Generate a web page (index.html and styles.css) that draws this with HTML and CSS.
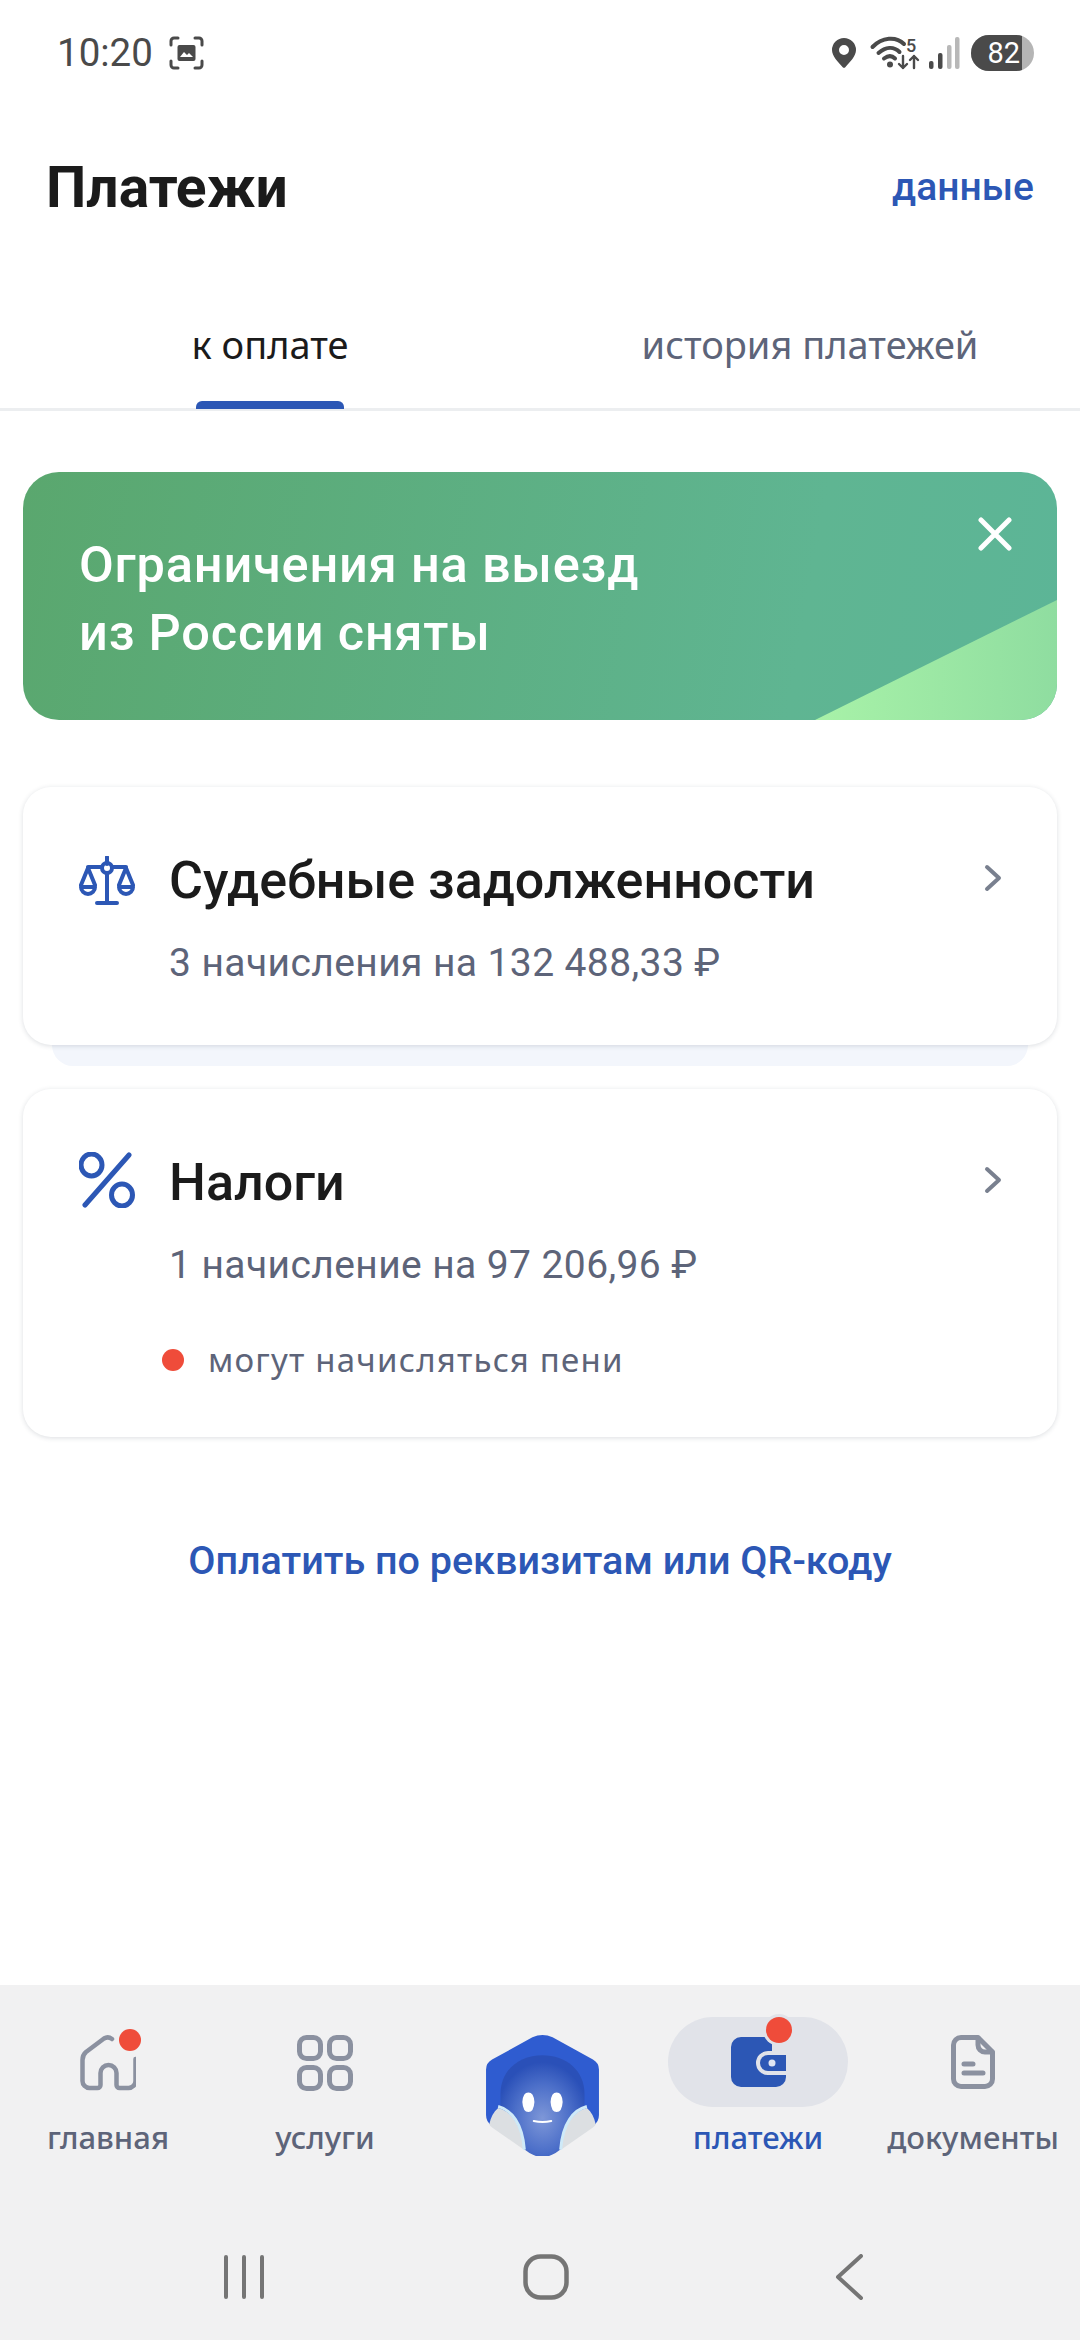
FILE: index.html
```html
<!DOCTYPE html>
<html lang="ru">
<head>
<meta charset="utf-8">
<title>Платежи</title>
<link rel="stylesheet" href="styles.css">
</head>
<body>
<div class="screen">
  <div class="status">
    <div class="status-left">
      <span class="time">10:20</span>
      <svg class="ic-shot" viewBox="0 0 35 34"><g fill="none" stroke="#4a4a4a" stroke-width="3" stroke-linecap="round"><path d="M2 9V5a3 3 0 0 1 3-3h4M26 2h4a3 3 0 0 1 3 3v4M33 25v4a3 3 0 0 1-3 3h-4M9 32H5a3 3 0 0 1-3-3v-4"/></g><rect x="8.500" y="9" width="18" height="16" rx="2" fill="#4a4a4a"/><path d="M11 21l4-5 3 3 2-2 4 4z" fill="#fff"/></svg>
    </div>
    <div class="status-right">
      <svg class="ic-pin" viewBox="0 0 24 30"><path fill-rule="evenodd" d="M12 0a12 12 0 0 1 12 12c0 6-6 12-10.500 17a2 2 0 0 1-3 0C6 24 0 18 0 12A12 12 0 0 1 12 0zm0 7a5 5 0 1 0 0 10 5 5 0 0 0 0-10z" fill="#4a4a4a"/></svg>
      <svg class="ic-wifi" viewBox="0 0 50 34"><g fill="none" stroke="#4a4a4a" stroke-width="4" stroke-linecap="round"><path d="M2.500 11C12 1 26 0 34 8"/><path d="M8.500 17c7-6 15-7 21-1"/><path d="M14 22.500c4-3 8-3 11 0"/></g><circle cx="20" cy="28.500" r="3" fill="#4a4a4a"/><g fill="none" stroke="#4a4a4a" stroke-width="2.400" stroke-linecap="round" stroke-linejoin="round"><path d="M33 20v12M29 28l4 4 4-4"/><path d="M44 32V20M40 24l4-4 4 4"/></g><text x="36" y="16" class="wifi-5">5</text></svg>
      <svg class="ic-signal" viewBox="0 0 32 34"><rect x="1" y="25" width="4.500" height="8" rx="2" fill="#4a4a4a"/><rect x="10" y="17" width="4.500" height="16" rx="2" fill="#4a4a4a"/><rect x="19" y="9" width="4.500" height="24" rx="2" fill="#b8b8b8"/><rect x="27" y="1" width="4.500" height="32" rx="2" fill="#b8b8b8"/></svg>
      <div class="battery"><div class="battery-level">82</div></div>
    </div>
  </div>

  <header class="header">
    <h1 class="title">Платежи</h1>
    <span class="data-link">данные</span>
  </header>

  <nav class="tabs">
    <div class="tab tab-active"><span>к оплате</span><i class="tab-bar"></i></div>
    <div class="tab"><span>история платежей</span></div>
  </nav>

  <section class="banner">
    <i class="banner-wedge"></i>
    <p class="banner-text">Ограничения на выезд<br>из России сняты</p>
    <svg class="banner-close" viewBox="0 0 34 34"><path d="M3 3l28 28M31 3L3 31" stroke="#fff" stroke-width="5" stroke-linecap="round"/></svg>
  </section>

  <section class="cards">
    <div class="card-stack">
      <article class="card card-court">
        <div class="card-head">
          <svg class="card-icon" viewBox="0 0 56 50"><g fill="none" stroke="#2c57b5" stroke-width="4" stroke-linecap="round" stroke-linejoin="round"><path d="M28 1v7"/><circle cx="28" cy="12" r="5"/><path d="M28 17v29M18 47h20M23 11H9M33 11h14"/><path d="M9 12L2 29M9 12l7 17M47 12l-7 17M47 12l7 17"/><path d="M2 31h14a7 7 0 0 1-14 0zM40 31h14a7 7 0 0 1-14 0z"/></g></svg>
          <h2 class="card-title">Судебные задолженности</h2>
          <svg class="chevron" viewBox="0 0 18 28"><path d="M3 3l12 11L3 25" fill="none" stroke="#79808f" stroke-width="4" stroke-linecap="round" stroke-linejoin="round"/></svg>
        </div>
        <p class="card-sub">3 начисления на 132 488,33 ₽</p>
      </article>
      <div class="card-under"></div>
    </div>
    <article class="card card-tax">
      <div class="card-head">
        <svg class="card-icon card-icon-tax" viewBox="0 0 56 56"><g fill="none" stroke="#2c57b5" stroke-width="5" stroke-linecap="round"><path d="M50 3L6 53"/><ellipse cx="12.500" cy="13" rx="10.500" ry="11"/><ellipse cx="43" cy="43" rx="10.500" ry="11"/></g></svg>
        <h2 class="card-title">Налоги</h2>
        <svg class="chevron" viewBox="0 0 18 28"><path d="M3 3l12 11L3 25" fill="none" stroke="#79808f" stroke-width="4" stroke-linecap="round" stroke-linejoin="round"/></svg>
      </div>
      <p class="card-sub">1 начисление на 97 206,96 ₽</p>
      <div class="card-warn"><i class="warn-dot"></i><span>могут начисляться пени</span></div>
    </article>
  </section>

  <div class="pay-link">Оплатить по реквизитам или QR-коду</div>

  <div class="bottom">
    <nav class="nav">
      <div class="nav-item nav-home">
        <div class="nav-icon">
          <svg viewBox="0 0 56 56"><path d="M32 4Q28 1 24 3.500L6 17Q2.500 20 2.500 25V46a7 7 0 0 0 7 7h8a3 3 0 0 0 3-3V38a8 8 0 0 1 16 0V50a3 3 0 0 0 3 3h9a7 7 0 0 0 7-7V24" fill="none" stroke="#8b91a0" stroke-width="4.500" stroke-linecap="round" stroke-linejoin="round"/></svg>
          <i class="badge badge-home"></i>
        </div>
        <span class="nav-label">главная</span>
      </div>
      <div class="nav-item nav-services">
        <div class="nav-icon">
          <svg viewBox="0 0 56 56"><g fill="none" stroke="#8b91a0" stroke-width="5"><rect x="2.500" y="2.500" width="21" height="21" rx="7"/><rect x="32.500" y="2.500" width="21" height="21" rx="7"/><rect x="2.500" y="32.500" width="21" height="21" rx="7"/><rect x="32.500" y="32.500" width="21" height="21" rx="7"/></g></svg>
        </div>
        <span class="nav-label">услуги</span>
      </div>
      <div class="nav-item nav-bot">
        <svg class="mascot" viewBox="132 75 336 360">
          <defs>
            <radialGradient id="headGrad" cx="50%" cy="62%" r="55%"><stop offset="0" stop-color="#7e97d8"/><stop offset="0.6" stop-color="#4c6fc9"/><stop offset="1" stop-color="#2a50b8"/></radialGradient>
          </defs>
          <path d="M270 82q30-14 60 0l120 66q18 10 18 30v135q0 22-18 32L330 428q-30 14-60 0L150 345q-18-10-18-32V178q0-20 18-30z" fill="#2f5cd0"/>
          <path d="M175 250c0-70 55-115 125-115s125 45 125 115v90l-65 70q-30 28-60 28t-60-28l-65-70z" fill="url(#headGrad)"/>
          <path d="M168 292c40 10 70 50 76 124l-94-66q-8-4-8-10c4-20 12-36 26-48z" fill="#dcdfe2"/>
          <path d="M432 292c-40 10-70 50-76 124l94-66q8-4 8-10c-4-20-12-36-26-48z" fill="#dcdfe2"/>
          <path d="M168 288c40 10 72 50 78 128M432 288c-40 10-72 50-78 128" fill="none" stroke="#cfeaf8" stroke-width="9"/>
          <path d="M258 246q16 0 18 28-2 30-18 30t-18-30q2-28 18-28zM342 246q16 0 18 28-2 30-18 30t-18-30q2-28 18-28z" fill="#fff"/>
          <path d="M274 331q26 6 52 0" fill="none" stroke="#fff" stroke-width="6" stroke-linecap="round"/>
        </svg>
      </div>
      <div class="nav-item nav-pay">
        <div class="nav-pill">
          <svg class="wallet" viewBox="0 0 55 50"><path d="M10 0h31v14H37a12 12 0 0 0 0 24h18v2a10 10 0 0 1-10 10H10A10 10 0 0 1 0 40V10A10 10 0 0 1 10 0z" fill="#2c57b5"/><path d="M37 18h18v16H37a8 8 0 0 1 0-16z" fill="#2c57b5"/><circle cx="41" cy="26" r="3.500" fill="#dfe5f3"/></svg>
          <i class="badge badge-pay"></i>
        </div>
        <span class="nav-label nav-label-active">платежи</span>
      </div>
      <div class="nav-item nav-docs">
        <div class="nav-icon">
          <svg class="doc" viewBox="0 0 44 54"><g fill="none" stroke="#8b91a0" stroke-width="5" stroke-linecap="round" stroke-linejoin="round"><path d="M27 2.500H10a7.500 7.500 0 0 0-7.500 7.500v34a7.500 7.500 0 0 0 7.500 7.500h24a7.500 7.500 0 0 0 7.500-7.500V17z"/><path d="M27 3v7a7 7 0 0 0 7 7h7"/><path d="M13 29h9M13 38h19"/></g></svg>
        </div>
        <span class="nav-label">документы</span>
      </div>
    </nav>
    <div class="sysnav">
      <svg class="sys-recent" viewBox="0 0 40 44"><path d="M2 2v40M20 2v40M38 2v40" stroke="#757575" stroke-width="4" stroke-linecap="round"/></svg>
      <svg class="sys-home" viewBox="0 0 46 46"><rect x="2.500" y="2.500" width="41" height="41" rx="15" fill="none" stroke="#757575" stroke-width="4.500"/></svg>
      <svg class="sys-back" viewBox="0 0 28 46"><path d="M26 2L3 23l23 21" fill="none" stroke="#757575" stroke-width="4" stroke-linecap="round" stroke-linejoin="round"/></svg>
    </div>
  </div>
</div>
</body>
</html>
```

FILE: styles.css
```css
* { box-sizing: border-box; margin: 0; padding: 0; }
html, body { width: 1080px; height: 2340px; background: #fff; overflow: hidden; }
body { font-family: Roboto, "Liberation Sans", sans-serif; color: #1b1b1b; }
i { display: block; }

.screen { width: 1080px; height: 2340px; display: flex; flex-direction: column; }

.status { height: 106px; padding: 0 46px 0 57px; display: flex; align-items: center; justify-content: space-between; }
.status-left { display: flex; align-items: center; gap: 16px; }
.time { font-size: 38.500px; color: #4a4a4a; line-height: 1; }
.ic-shot { width: 35px; height: 34px; }
.status-right { display: flex; align-items: center; }
.ic-pin { width: 24px; height: 30px; margin-right: 14px; }
.ic-wifi { width: 50px; height: 34px; margin-right: 8px; overflow: visible; }
.wifi-5 { font-family: Roboto, sans-serif; font-size: 18px; font-weight: 500; fill: #4a4a4a; }
.ic-signal { width: 32px; height: 34px; margin-right: 11px; }
.battery { width: 63px; height: 36px; border-radius: 18px; background: #b5b5b5; overflow: hidden; }
.battery-level { width: 51px; height: 36px; background: #4a4a4a; color: #fff; font-size: 29px; line-height: 36px; text-align: right; padding-right: 2px; }

.header { height: 162px; padding: 0 46px; display: flex; align-items: center; justify-content: space-between; }
.title { font-size: 57px; font-weight: 700; line-height: 1; }
.data-link { font-size: 39px; font-weight: 500; color: #2c57b5; }

.tabs { height: 143px; display: flex; align-items: flex-end; border-bottom: 3px solid #eceef0; }
.tab { width: 540px; height: 90px; position: relative; text-align: center; font-family: "Noto Sans", sans-serif; font-size: 38px; line-height: 52px; color: #5d6479; }
.tab-active { color: #1b1b1b; }
.tab-bar { position: absolute; left: 196px; bottom: -1px; width: 148px; height: 8px; border-radius: 6px 6px 0 0; background: #2c57b5; }

.banner { position: relative; overflow: hidden; margin: 61px 23px 0; height: 248px; border-radius: 36px; background: linear-gradient(100deg, #5aa76e 0%, #5fb592 75%, #5cb597 100%); display: flex; align-items: center; padding: 6px 0 0 56px; }
.banner-wedge { position: absolute; right: 0; bottom: 0; width: 242px; height: 120px; background: linear-gradient(90deg, #a8f2a8, #8fdda0); clip-path: polygon(100% 0, 100% 100%, 0 100%); }
.banner-text { position: relative; color: #fff; font-size: 50.500px; font-weight: 500; line-height: 68px; letter-spacing: 0.8px; }
.banner-close { position: absolute; top: 45px; right: 45px; width: 34px; height: 34px; }

.cards { margin: 67px 23px 0; display: flex; flex-direction: column; }
.card-stack { display: flex; flex-direction: column; align-items: center; }
.card { width: 1034px; background: #fff; border-radius: 28px; box-shadow: 0 1px 5px rgba(40, 50, 70, 0.16); padding: 0 56px; }
.card-court { height: 258px; position: relative; padding-top: 66px; }
.card-under { width: 976px; height: 21px; background: #f3f6fc; border-radius: 0 0 24px 24px; }
.card-tax { height: 348px; margin-top: 23px; padding-top: 66px; }
.card-head { display: flex; align-items: center; height: 56px; }
.card-icon { width: 56px; height: 50px; flex: none; margin-right: 34px; }
.card-icon-tax { height: 56px; margin-top: -6px; }
.card-title { flex: 1; font-size: 52px; font-weight: 500; line-height: 56px; }
.chevron { width: 18px; height: 28px; flex: none; margin-right: -1px; position: relative; top: -3px; }
.card-sub { margin: 30px 0 0 90px; font-size: 39px; line-height: 48px; color: #5d6479; letter-spacing: 0.4px; }
.card-warn { margin: 49px 0 0 83px; display: flex; align-items: center; gap: 24px; font-family: "Noto Sans", sans-serif; font-size: 33px; line-height: 44px; letter-spacing: 1.2px; color: #5d6479; }
.warn-dot { width: 22px; height: 22px; border-radius: 50%; background: #ef4c3a; }

.pay-link { margin-top: 99px; height: 50px; text-align: center; font-size: 39.500px; font-weight: 500; line-height: 50px; color: #2c57b5; }

.bottom { margin-top: auto; height: 355px; background: #f1f1f2; display: flex; flex-direction: column; }
.nav { height: 222px; display: grid; grid-template-columns: 216px 218px 216px 216px 214px; }
.nav-item { display: flex; flex-direction: column; align-items: center; }
.nav-icon { position: relative; width: 56px; height: 56px; margin-top: 50px; }
.nav-icon svg { display: block; width: 56px; height: 56px; }
.nav-icon .doc { width: 44px; height: 54px; margin: 0 auto; }
.nav-label { margin-top: 24px; font-family: "Noto Sans", sans-serif; font-size: 31px; font-weight: 500; line-height: 44px; color: #5d6479; white-space: nowrap; }
.nav-label-active { color: #2c57b5; }
.badge { position: absolute; width: 22px; height: 22px; border-radius: 50%; background: #ef4c3a; }
.badge-home { top: -6px; right: -5px; box-shadow: 0 0 0 1px #f1f1f2; }
.badge-pay { top: 0; left: 98px; width: 26px; height: 26px; box-shadow: 0 0 0 3px #e1e3e9; }
.nav-pill { position: relative; width: 180px; height: 90px; margin-top: 32px; border-radius: 45px; background: #e1e3e9; display: flex; align-items: center; justify-content: center; }
.wallet { width: 55px; height: 50px; }
.nav-pay .nav-label { margin-top: 8px; }
.mascot { width: 113px; height: 121px; margin-top: 50px; }

.sysnav { flex: 1; display: flex; align-items: center; padding: 6px 0 0 224px; }
.sys-recent { width: 40px; height: 44px; }
.sys-home { width: 46px; height: 46px; margin-left: 259px; }
.sys-back { width: 28px; height: 46px; margin-left: 266px; }
```
